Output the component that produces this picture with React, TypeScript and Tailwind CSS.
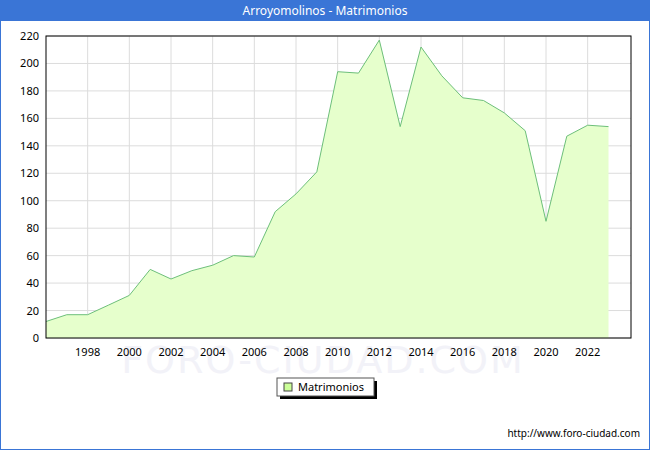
const data = [12, 17, 17, 24, 31, 50, 43, 49, 53, 60, 59, 92, 105, 121, 194, 193, 217, 154, 212, 191, 175, 173, 164, 151, 85, 147, 155, 154]

const X0 = 45
const Y0 = 337
const px = (i: number) => X0 + i * (500 / 24)
const py = (v: number) => Y0 - v * (302 / 220)

export default function App() {
  const pts = data.map((v, i) => `${px(i).toFixed(1)},${py(v).toFixed(1)}`).join(' ')
  const area = `${X0},${Y0} ${pts} ${px(data.length - 1).toFixed(1)},${Y0}`
  const yTicks = [0, 20, 40, 60, 80, 100, 120, 140, 160, 180, 200, 220]
  const xTicks = [1998, 2000, 2002, 2004, 2006, 2008, 2010, 2012, 2014, 2016, 2018, 2020, 2022]

  return (
    <div className="w-[650px] h-[450px] bg-white flex flex-col border border-[#3a75d6] font-['DejaVu_Sans',sans-serif]">
      <div className="h-[20px] bg-[#3a75d6] text-white text-[12px] flex items-center justify-center">
        Arroyomolinos - Matrimonios
      </div>
      <div className="relative flex-1">
        <svg width="648" height="428" className="absolute left-0 top-0">
          <text x="322" y="352" fontSize="38" fill="#f2f2f8" textAnchor="middle" fontFamily="DejaVu Sans" letterSpacing="2">FORO-CIUDAD.COM</text>
          {yTicks.map((t) => (
            <g key={t}>
              <line x1={X0} x2={630} y1={py(t) - 20} y2={py(t) - 20} stroke="#dcdcdc" />
              <text x={38} y={py(t) - 16} fontSize="11" textAnchor="end" fill="#000">{t}</text>
            </g>
          ))}
          {xTicks.map((y) => {
            const x = px(y - 1996)
            return (
              <g key={y}>
                <line x1={x} x2={x} y1={15} y2={Y0 - 20} stroke="#dcdcdc" />
                <text x={x} y={Y0 - 20 + 18} fontSize="11" textAnchor="middle" fill="#000">{y}</text>
              </g>
            )
          })}
          <g transform="translate(0,-20)">
            <polygon points={area} fill="#e6ffcc" />
            <polyline points={pts} fill="none" stroke="#6dbf7a" strokeWidth="1" />
          </g>
          <rect x={X0} y={15} width={585} height={302} fill="none" stroke="#000" />
          <rect x={279} y={360} width={97} height={18} fill="#000" />
          <rect x={276} y={357} width={97} height={18} fill="#fff" stroke="#555" />
          <rect x={283} y={362} width={8} height={8} fill="#ccff99" stroke="#444" />
          <text x={297} y={370} fontSize="11" fill="#000">Matrimonios</text>
          <text x={639} y={416} fontSize="10" textAnchor="end" fill="#000">http://www.foro-ciudad.com</text>
        </svg>
      </div>
    </div>
  )
}
